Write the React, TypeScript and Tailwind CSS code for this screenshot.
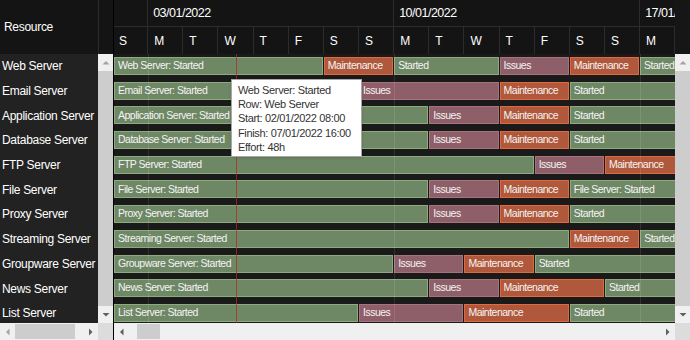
import React from "react";

const D = 246 / 7; // width of one day column

type Kind = "s" | "m" | "i";
type Seg = [Kind, number, number, string?];

const kindClass: Record<Kind, string> = {
  s: "bg-[#6e8764] border-[#8dab7f]",
  m: "bg-[#b0583b] border-[#e06a40]",
  i: "bg-[#8e5f68] border-[#a6737c]",
};

const kindLabel: Record<Kind, string> = {
  s: "Started",
  m: "Maintenance",
  i: "Issues",
};

const rows: { name: string; segs: Seg[] }[] = [
  { name: "Web Server", segs: [["s", 0, 6, "Web Server: Started"], ["m", 6, 8], ["s", 8, 11], ["i", 11, 13], ["m", 13, 15], ["s", 15, 20]] },
  { name: "Email Server", segs: [["s", 0, 7, "Email Server: Started"], ["i", 7, 11], ["m", 11, 13], ["s", 13, 20]] },
  { name: "Application Server", segs: [["s", 0, 9, "Application Server: Started"], ["i", 9, 11], ["m", 11, 13], ["s", 13, 20]] },
  { name: "Database Server", segs: [["s", 0, 9, "Database Server: Started"], ["i", 9, 11], ["m", 11, 13], ["s", 13, 20]] },
  { name: "FTP Server", segs: [["s", 0, 12, "FTP Server: Started"], ["i", 12, 14], ["m", 14, 18]] },
  { name: "File Server", segs: [["s", 0, 9, "File Server: Started"], ["i", 9, 11], ["m", 11, 13], ["s", 13, 20, "File Server: Started"]] },
  { name: "Proxy Server", segs: [["s", 0, 9, "Proxy Server: Started"], ["i", 9, 11], ["m", 11, 13], ["s", 13, 20]] },
  { name: "Streaming Server", segs: [["s", 0, 13, "Streaming Server: Started"], ["m", 13, 15], ["s", 15, 20]] },
  { name: "Groupware Server", segs: [["s", 0, 8, "Groupware Server: Started"], ["i", 8, 10], ["m", 10, 12], ["s", 12, 20]] },
  { name: "News Server", segs: [["s", 0, 9, "News Server: Started"], ["i", 9, 11], ["m", 11, 14], ["s", 14, 20]] },
  { name: "List Server", segs: [["s", 0, 7, "List Server: Started"], ["i", 7, 10], ["m", 10, 13], ["s", 13, 20]] },
];

const days = ["S", "M", "T", "W", "T", "F", "S", "S", "M", "T", "W", "T", "F", "S", "S", "M"];
const weeks = ["03/01/2022", "10/01/2022", "17/01/2022"];

const px = (i: number) => Math.max(i * D - 1, 0);

function Arrow({ dir, dark }: { dir: "up" | "down" | "left" | "right"; dark?: boolean }) {
  const d = {
    up: "M0.5 4.5 L4 1 L7.5 4.5 Z",
    down: "M0.5 1 L4 4.5 L7.5 1 Z",
    left: "M4.5 0.5 L1 4 L4.5 7.5 Z",
    right: "M1 0.5 L4.5 4 L1 7.5 Z",
  }[dir];
  const vertical = dir === "up" || dir === "down";
  return (
    <svg
      width={vertical ? 8 : 6}
      height={vertical ? 6 : 8}
      viewBox={vertical ? "0 0 8 6" : "0 0 6 8"}
      className={dark ? "fill-[#606060]" : "fill-[#a3a3a3]"}
    >
      <path d={d} />
    </svg>
  );
}

function VScroll() {
  return (
    <div className="flex w-[15px] flex-col bg-[#cdcdcd]">
      <div className="flex h-[17px] items-center justify-center bg-[#f0f0f0]">
        <Arrow dir="up" />
      </div>
      <div className="flex-1" />
      <div className="flex h-[17px] items-center justify-center bg-[#f0f0f0]">
        <Arrow dir="down" dark />
      </div>
    </div>
  );
}

export default function App() {
  return (
    <div className="relative flex h-[340px] w-[690px] overflow-hidden bg-[#141414] font-['Liberation_Sans',Arial,sans-serif] text-white">
      {/* Resource list */}
      <div className="flex w-[113px] flex-col">
        <div className="flex h-[54px] shrink-0">
          <div className="flex w-[99px] items-center border-r border-[#2c2c2c] pl-[4px] text-[12px] tracking-[-0.3px]">
            Resource
          </div>
          <div className="flex-1" />
        </div>
        <div className="flex min-h-0 flex-1">
          <div className="w-[98px] overflow-hidden bg-[#222222]">
            {rows.map((r) => (
              <div
                key={r.name}
                className="flex h-[24.7px] items-center whitespace-nowrap pl-[2px] text-[12px] tracking-[-0.3px]"
              >
                {r.name}
              </div>
            ))}
          </div>
          <VScroll />
        </div>
        <div className="flex h-[17px] shrink-0">
          <div className="flex w-[98px] items-center bg-[#f0f0f0]">
            <div className="flex w-[15px] justify-center">
              <Arrow dir="left" />
            </div>
            <div className="h-[15px] w-[60px] bg-[#cdcdcd]" />
            <div className="flex-1" />
            <div className="flex w-[15px] justify-center">
              <Arrow dir="right" dark />
            </div>
          </div>
          <div className="w-[15px] bg-[#dcdcdc]" />
        </div>
      </div>

      <div className="w-px bg-black" />

      {/* Timeline */}
      <div className="flex min-w-0 flex-1 flex-col">
        <div className="flex h-[54px] shrink-0">
          <div className="min-w-0 flex-1 overflow-hidden">
            <div className="-ml-px flex h-[27px] border-b border-[#2c2c2c]">
              <div className="shrink-0 border-r border-[#2c2c2c]" style={{ width: D }} />
              {weeks.map((w) => (
                <div
                  key={w}
                  className="flex shrink-0 items-center overflow-hidden whitespace-nowrap border-r border-[#2c2c2c] pl-[5px] text-[12.5px] tracking-[-0.5px]"
                  style={{ width: D * 7 }}
                >
                  {w}
                </div>
              ))}
            </div>
            <div className="-ml-px flex h-[27px]">
              {days.map((d, i) => (
                <div
                  key={i}
                  className="flex shrink-0 items-center border-r border-[#2c2c2c] pl-[6px] text-[12px]"
                  style={{ width: D }}
                >
                  {d}
                </div>
              ))}
            </div>
          </div>
          <div className="w-[15px] bg-[#161616]" />
        </div>

        <div className="flex min-h-0 flex-1">
          <div className="relative min-w-0 flex-1 overflow-hidden bg-[#1a1a1a]">
            {rows.map((r) => (
              <div key={r.name} className="flex h-[24.7px] items-start pt-[3px]">
                {r.segs.map(([k, s, e, label], j) => (
                  <div
                    key={j}
                    className={`mr-px flex h-[18px] shrink-0 items-center overflow-hidden whitespace-nowrap border px-[3px] text-[10.5px] tracking-[-0.5px] text-[#f4f4f4] ${kindClass[k]}`}
                    style={{ width: px(e) - px(s) - 1 }}
                  >
                    {label ?? kindLabel[k]}
                  </div>
                ))}
              </div>
            ))}
            {[1, 8, 15].map((i) => (
              <div
                key={i}
                className="absolute top-0 bottom-0 w-px bg-white/10"
                style={{ left: i * D - 1 }}
              />
            ))}
            <div className="absolute top-0 bottom-0 left-[122px] w-px bg-[#b02a2a]/75" />
          </div>
          <VScroll />
        </div>

        <div className="flex h-[17px] shrink-0">
          <div className="flex flex-1 items-center bg-[#f0f0f0]">
            <div className="flex w-[15px] justify-center">
              <Arrow dir="left" dark />
            </div>
            <div className="ml-[8px] h-[15px] w-[23px] bg-[#cdcdcd]" />
            <div className="flex-1" />
            <div className="flex w-[15px] justify-center">
              <Arrow dir="right" dark />
            </div>
          </div>
          <div className="w-[15px] bg-[#dcdcdc]" />
        </div>
      </div>

      {/* Tooltip */}
      <div className="absolute left-[231px] top-[79px] h-[78px] w-[131px] border border-[#a8a8a8] bg-white pl-[6px] pt-[3px] text-[11px] leading-[14.2px] tracking-[-0.35px] text-[#333333] shadow-sm">
        <div>Web Server: Started</div>
        <div>Row: Web Server</div>
        <div>Start: 02/01/2022 08:00</div>
        <div>Finish: 07/01/2022 16:00</div>
        <div>Effort: 48h</div>
      </div>
    </div>
  );
}
